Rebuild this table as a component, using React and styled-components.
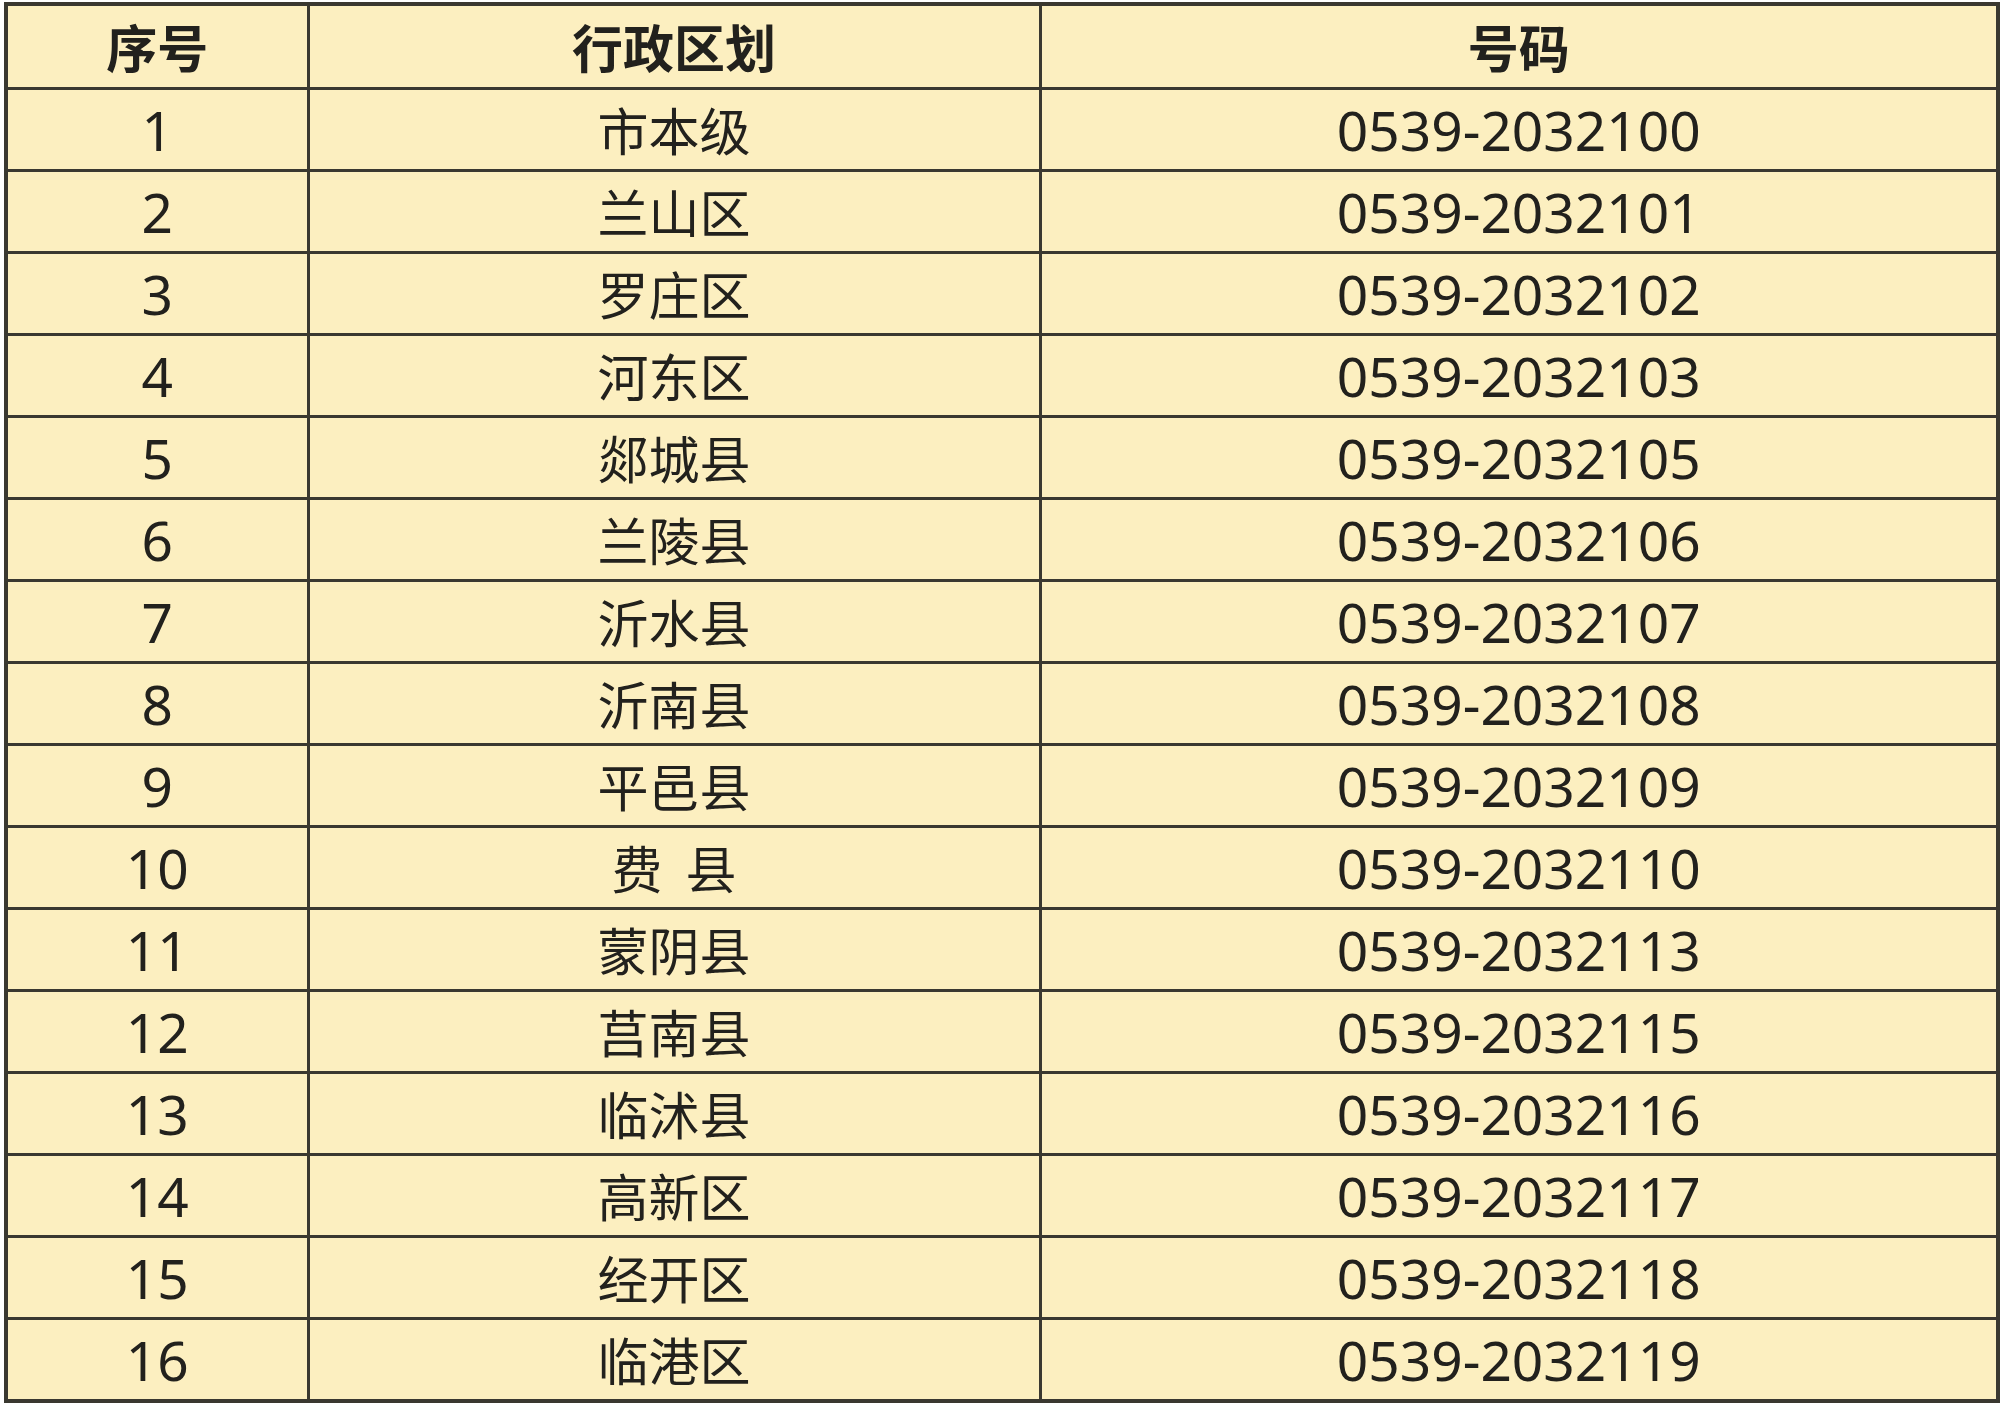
import React from "react";
import styled, { createGlobalStyle } from "styled-components";

const GlobalStyle = createGlobalStyle`
  html, body {
    margin: 0;
    padding: 0;
    background: #ffffff;
  }
`;

const Page = styled.div`
  padding: 2px 0 0 4px;
`;

const Table = styled.table`
  width: 1992px;
  table-layout: fixed;
  border-collapse: collapse;
  background: #fcefc0;
  border: 4px solid #3a3830;
  color: #22211d;
`;

const Cell = styled.td`
  height: ${props => (props.head ? "80.5px" : "79.05px")};
  padding: 0;
  border: 3.5px solid #3a3830;
  text-align: center;
  vertical-align: middle;
  font-family: ${props =>
    props.cjk
      ? '"Noto Sans CJK SC", "Noto Sans", sans-serif'
      : '"Noto Sans", "Noto Sans CJK SC", sans-serif'};
  font-size: ${props => (props.cjk ? "51px" : "55px")};
  font-weight: ${props => (props.head ? 700 : 400)};
  line-height: 1;
  white-space: pre;
`;

const rows = [
  ["市本级", "0539-2032100"],
  ["兰山区", "0539-2032101"],
  ["罗庄区", "0539-2032102"],
  ["河东区", "0539-2032103"],
  ["郯城县", "0539-2032105"],
  ["兰陵县", "0539-2032106"],
  ["沂水县", "0539-2032107"],
  ["沂南县", "0539-2032108"],
  ["平邑县", "0539-2032109"],
  ["费\u00a0\u00a0县", "0539-2032110"],
  ["蒙阴县", "0539-2032113"],
  ["莒南县", "0539-2032115"],
  ["临沭县", "0539-2032116"],
  ["高新区", "0539-2032117"],
  ["经开区", "0539-2032118"],
  ["临港区", "0539-2032119"],
];

export default function App() {
  return (
    <Page>
      <GlobalStyle />
      <Table>
        <colgroup>
          <col style={{ width: "302px" }} />
          <col style={{ width: "732px" }} />
          <col style={{ width: "958px" }} />
        </colgroup>
        <thead>
          <tr>
            <Cell as="th" head cjk>序号</Cell>
            <Cell as="th" head cjk>行政区划</Cell>
            <Cell as="th" head cjk>号码</Cell>
          </tr>
        </thead>
        <tbody>
          {rows.map(([area, phone], i) => (
            <tr key={phone}>
              <Cell>{i + 1}</Cell>
              <Cell cjk>{area}</Cell>
              <Cell>{phone}</Cell>
            </tr>
          ))}
        </tbody>
      </Table>
    </Page>
  );
}
